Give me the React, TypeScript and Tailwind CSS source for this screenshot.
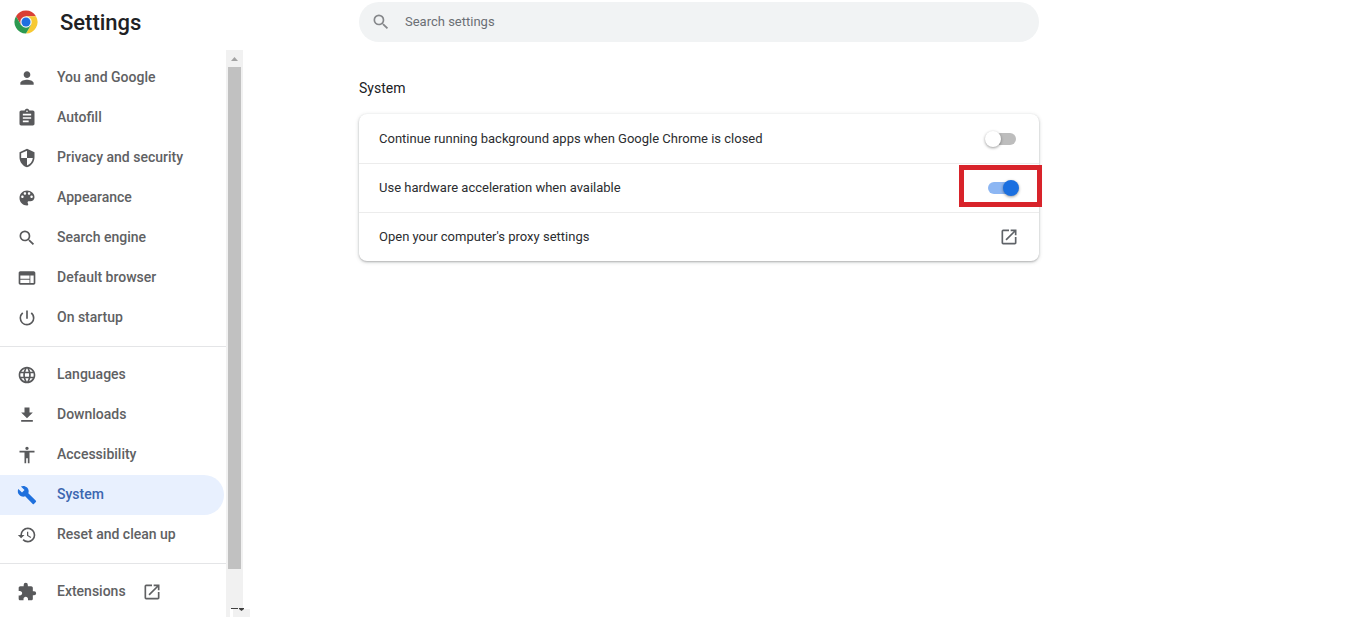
import { useState } from 'react';
import type { ReactNode } from 'react';
import type { IconType } from 'react-icons';
import {
    MdAccessibility,
    MdAssignment,
    MdBuild,
    MdExtension,
    MdHistory,
    MdLanguage,
    MdOpenInNew,
    MdPerson,
    MdPowerSettingsNew,
    MdSearch,
    MdSecurity,
    MdWeb,
} from 'react-icons/md';

interface NavEntry {
    label: string;
    icon: IconType;
    external?: boolean;
}

function PaletteIcon({ className }: { className?: string }) {
    return (
        <svg viewBox="0 0 24 24" fill="currentColor" className={className} aria-hidden="true">
            <path d="M12 3c-4.970 0-9 4.030-9 9s4.030 9 9 9c.830 0 1.500-.670 1.500-1.500 0-.390-.150-.740-.390-1.010-.230-.260-.380-.610-.380-.990 0-.830.670-1.500 1.500-1.500H16c2.760 0 5-2.240 5-5 0-4.420-4.030-8-9-8zm-5.500 9c-.830 0-1.500-.670-1.500-1.500S5.670 9 6.500 9 8 9.670 8 10.500 7.330 12 6.500 12zm3-4C8.670 8 8 7.330 8 6.500S8.670 5 9.500 5s1.500.670 1.500 1.500S10.330 8 9.500 8zm5 0c-.830 0-1.500-.670-1.500-1.500S13.670 5 14.500 5s1.500.670 1.500 1.500S15.330 8 14.500 8zm3 4c-.830 0-1.500-.670-1.500-1.500S16.670 9 17.500 9s1.500.670 1.500 1.500-.670 1.500-1.500 1.500z" />
        </svg>
    );
}

function DownloadIcon({ className }: { className?: string }) {
    return (
        <svg viewBox="0 0 24 24" fill="currentColor" className={className} aria-hidden="true">
            <path d="M19 9h-4V3H9v6H5l7 7 7-7zM5 18v2h14v-2H5z" />
        </svg>
    );
}

const basicItems: NavEntry[] = [
    { label: 'You and Google', icon: MdPerson },
    { label: 'Autofill', icon: MdAssignment },
    { label: 'Privacy and security', icon: MdSecurity },
    { label: 'Appearance', icon: PaletteIcon },
    { label: 'Search engine', icon: MdSearch },
    { label: 'Default browser', icon: MdWeb },
    { label: 'On startup', icon: MdPowerSettingsNew },
];

const advancedItems: NavEntry[] = [
    { label: 'Languages', icon: MdLanguage },
    { label: 'Downloads', icon: DownloadIcon },
    { label: 'Accessibility', icon: MdAccessibility },
    { label: 'System', icon: MdBuild },
    { label: 'Reset and clean up', icon: MdHistory },
];

const extraItems: NavEntry[] = [{ label: 'Extensions', icon: MdExtension, external: true }];

function ChromeLogo() {
    return (
        <svg viewBox="0 0 48 48" className="size-6" aria-hidden="true">
            <path fill="#d93f35" d="M4.08 12.5 14 30 24 24V12.5H43.92A23 23 0 0 0 4.08 12.5Z" />
            <path fill="#f7c934" d="M43.92 12.5A23 23 0 0 1 24 47L33.96 29.75 24 24V12.5Z" />
            <path fill="#2c9950" d="M4.08 12.5 14.04 29.75 24 24 33.96 29.75 24 47A23 23 0 0 1 4.08 12.5Z" />
            <circle cx="24" cy="24" r="11.5" fill="#f4f6f8" />
            <circle cx="24" cy="24" r="9" fill="#1f6fe0" />
        </svg>
    );
}

interface NavGroupProps {
    items: NavEntry[];
    selected: string;
    onSelect: (label: string) => void;
}

function NavGroup({ items, selected, onSelect }: NavGroupProps) {
    return (
        <ul className="py-2">
            {items.map(({ label, icon: Icon, external }) => (
                <li key={label}>
                    <a
                        href="#"
                        onClick={() => onSelect(label)}
                        className={`mr-0.5 flex h-10 items-center rounded-r-full pl-[17px] text-sm font-medium ${
                            selected === label ? 'bg-[#e8f0fe] text-[#3c66b0]' : 'text-[#606163]'
                        }`}
                    >
                        <Icon className={`mr-5 size-5 ${selected === label ? 'text-[#1f70dd]' : 'text-[#58595b]'}`} />
                        <span className="pb-0.5">{label}</span>
                        {external && <MdOpenInNew className="ml-4 size-5" />}
                    </a>
                </li>
            ))}
        </ul>
    );
}

function ScrollTrack() {
    return (
        <div className="flex w-[17px] flex-col items-center bg-[#f1f1f1]" aria-hidden="true">
            <svg viewBox="0 0 17 17" className="size-[17px]">
                <path d="M5 11h7L8.500 7Z" fill="#a3a3a3" />
            </svg>
            <div className="h-[502px] w-[13px] bg-[#c1c1c1]" />
        </div>
    );
}

interface ToggleProps {
    id: string;
    checked: boolean;
    onChange: (value: boolean) => void;
}

function Toggle({ id, checked, onChange }: ToggleProps) {
    return (
        <span className="relative flex h-4 w-[34px] items-center justify-center">
            <input
                id={id}
                type="checkbox"
                role="switch"
                checked={checked}
                onChange={(e) => onChange(e.target.checked)}
                className="peer h-3 w-7 cursor-pointer appearance-none rounded-full bg-[#bdbdbd] checked:bg-[#8cb6f3]"
            />
            <span className="pointer-events-none absolute left-0 size-4 rounded-full bg-white shadow-[0_1px_3px_rgba(0,0,0,0.4)] peer-checked:left-auto peer-checked:right-0 peer-checked:bg-[#1a6fe0]" />
        </span>
    );
}

function SettingRow({ htmlFor, label, children }: { htmlFor: string; label: string; children: ReactNode }) {
    return (
        <div className="flex h-[49px] items-center justify-between border-t border-[#ececec] pl-5 first:border-t-0">
            <label htmlFor={htmlFor} className="text-[13px] text-[#2b2d30]">
                {label}
            </label>
            {children}
        </div>
    );
}

export default function App() {
    const [selected, setSelected] = useState('System');
    const [background, setBackground] = useState(false);
    const [acceleration, setAcceleration] = useState(true);

    return (
        <div className="flex h-screen overflow-hidden bg-white font-[Roboto,sans-serif] text-[#202124]">
            <aside className="flex w-[243px] shrink-0 flex-col">
                <header className="flex h-[50px] shrink-0 items-center gap-[22px] pb-1.5 pl-3.5">
                    <ChromeLogo />
                    <h1 className="text-[22px] font-medium">Settings</h1>
                </header>
                <div className="relative flex min-h-0 flex-1">
                    <nav className="flex-1">
                        <NavGroup items={basicItems} selected={selected} onSelect={setSelected} />
                        <hr className="border-[#e4e5e7]" />
                        <NavGroup items={advancedItems} selected={selected} onSelect={setSelected} />
                        <hr className="border-[#e4e5e7]" />
                        <NavGroup items={extraItems} selected={selected} onSelect={setSelected} />
                    </nav>
                    <ScrollTrack />
                    <svg viewBox="0 0 20 10" className="absolute -right-[7px] bottom-0 h-2.5 w-5" aria-hidden="true">
                        <path d="M0 2h3v8H0Z" fill="#fff" />
                        <path d="M3 2h17v8H3Z" fill="#f1f1f1" />
                        <path d="M1 1h7v1H1ZM9 1h5v1l-2.500 2L9 2Z" fill="#404040" />
                    </svg>
                </div>
            </aside>

            <main className="flex-1 pt-0.5">
                <div className="ml-[116px] w-full max-w-[680px]">
                    <div className="flex h-10 items-center rounded-full bg-[#f1f3f4] pl-3">
                        <MdSearch className="size-5 text-[#85878a]" />
                        <input
                            type="search"
                            aria-label="Search settings"
                            placeholder="Search settings"
                            className="ml-3.5 flex-1 bg-transparent text-[13px] outline-none placeholder:text-[#6b6f74]"
                        />
                    </div>

                    <h2 className="pt-9 pb-4 text-sm leading-5">System</h2>
                    <section className="rounded-lg bg-white shadow-[0_1px_2px_rgba(60,64,67,0.3),0_1px_4px_rgba(60,64,67,0.2)]">
                        <SettingRow htmlFor="background" label="Continue running background apps when Google Chrome is closed">
                            <div className="pr-5">
                                <Toggle id="background" checked={background} onChange={setBackground} />
                            </div>
                        </SettingRow>
                        <SettingRow htmlFor="acceleration" label="Use hardware acceleration when available">
                            <div className="relative z-10 -mr-[3px] mb-1 flex h-[42px] w-[83px] shrink-0 items-center justify-end border-5 border-[#d8232a] pt-1 pr-[18px]">
                                <Toggle id="acceleration" checked={acceleration} onChange={setAcceleration} />
                            </div>
                        </SettingRow>
                        <SettingRow htmlFor="proxy" label="Open your computer's proxy settings">
                            <button id="proxy" type="button" className="mr-5 cursor-pointer text-[#5f6368]">
                                <MdOpenInNew className="size-5" />
                            </button>
                        </SettingRow>
                    </section>
                </div>
            </main>
        </div>
    );
}
